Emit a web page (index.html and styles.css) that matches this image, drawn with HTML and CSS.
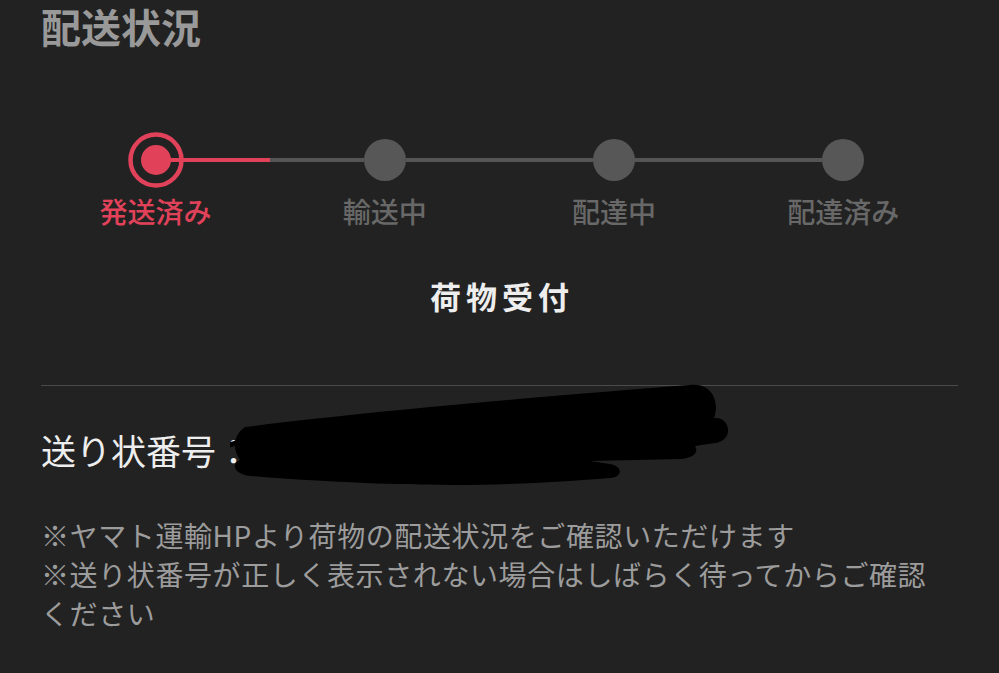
FILE: index.html
```html
<!DOCTYPE html>
<html lang="ja">

<head>
    <meta charset="UTF-8">
    <meta name="viewport" content="width=device-width, initial-scale=1.0">
    <title>配送状況</title>
    <link rel="stylesheet" href="styles.css">
</head>

<body>
    <div class="container">
        <h1>配送状況</h1>

        <div class="stepper">
            <div class="step active">
                <div class="track">
                    <span class="seg none"></span>
                    <svg class="marker" width="56" height="56" viewBox="0 0 56 56">
                        <circle cx="28" cy="28" r="25.5" fill="none" stroke="#e1425a" stroke-width="4.5" />
                        <circle cx="28" cy="28" r="15" fill="#e1425a" />
                        <rect x="28" y="26" width="28" height="4" fill="#e1425a" />
                    </svg>
                    <span class="seg red"></span>
                </div>
                <div class="label">発送済み</div>
            </div>
            <div class="step">
                <div class="track">
                    <span class="seg"></span>
                    <span class="dot"></span>
                    <span class="seg"></span>
                </div>
                <div class="label">輸送中</div>
            </div>
            <div class="step">
                <div class="track">
                    <span class="seg"></span>
                    <span class="dot"></span>
                    <span class="seg"></span>
                </div>
                <div class="label">配達中</div>
            </div>
            <div class="step">
                <div class="track">
                    <span class="seg"></span>
                    <span class="dot"></span>
                    <span class="seg none"></span>
                </div>
                <div class="label">配達済み</div>
            </div>
        </div>

        <div class="status">荷物受付</div>

        <hr class="divider">

        <div class="tracking">
            <span>送り状番号：</span>
            <!-- redacted number -->
            <svg class="redact" width="520" height="115" viewBox="230 380 520 115">
                <path d="M 245 427 C 380 410, 560 395, 690 385 C 712 382, 720 402, 714 418 C 730 416, 735 440, 715 443 L 695 446 C 699 452, 694 458, 680 459 L 590 461 L 610 464 C 623 466, 623 477, 610 478 C 520 485, 430 490, 250 476 C 233 474, 231 463, 240 460 C 233 450, 232 436, 245 427 Z" fill="#000" />
                <path d="M 230 445 L 242 441" stroke="#000" stroke-width="5" stroke-linecap="round" />
            </svg>
        </div>

        <div class="notes">
            <p>※ヤマト運輸HPより荷物の配送状況をご確認いただけます</p>
            <p>※送り状番号が正しく表示されない場合はしばらく待ってからご確認ください</p>
        </div>
    </div>
</body>

</html>
```

FILE: styles.css
```css
body {
    font-family: "Noto Sans CJK JP", "Noto Sans", sans-serif;
    margin: 0;
    padding: 0;
    background-color: #222222;
}

.container {
    padding: 0 41px;
}

h1 {
    margin: 0;
    padding-top: 3px;
    font-size: 40px;
    line-height: 46px;
    font-weight: 700;
    color: #999999;
}

.stepper {
    display: grid;
    grid-template-columns: repeat(4, 1fr);
    margin-top: 83px;
}

.step {
    display: flex;
    flex-direction: column;
    align-items: center;
}

.track {
    display: flex;
    align-items: center;
    width: 100%;
    height: 56px;
}

.seg {
    flex: 1;
    height: 4px;
    background: #555555;
}

.seg.red {
    background: #e1425a;
}

.seg.none {
    background: transparent;
}

.dot {
    width: 42px;
    height: 42px;
    border-radius: 50%;
    background: #575757;
}

.marker {
    display: block;
}

.label {
    margin-top: 5px;
    font-size: 28px;
    line-height: 36px;
    font-weight: 500;
    color: #686868;
}

.step.active .label {
    color: #e1425a;
}

.status {
    margin-top: 47px;
    padding-left: 5px;
    text-align: center;
    font-size: 31px;
    line-height: 40px;
    font-weight: 700;
    letter-spacing: 5px;
    color: #eeeeee;
}

.divider {
    margin: 69px 0 0;
    border: none;
    height: 1px;
    background: #4a4a4a;
}

.tracking {
    position: relative;
    margin-top: 42px;
    font-size: 35px;
    line-height: 44px;
    color: #eeeeee;
}

.redact {
    position: absolute;
    left: 189px;
    top: -48px;
}

.notes {
    max-width: 895px;
    margin-top: 44px;
}

.notes p {
    margin: 0;
    font-size: 28px;
    line-height: 39px;
    letter-spacing: 0.6px;
    color: #9c9c9c;
}
```
